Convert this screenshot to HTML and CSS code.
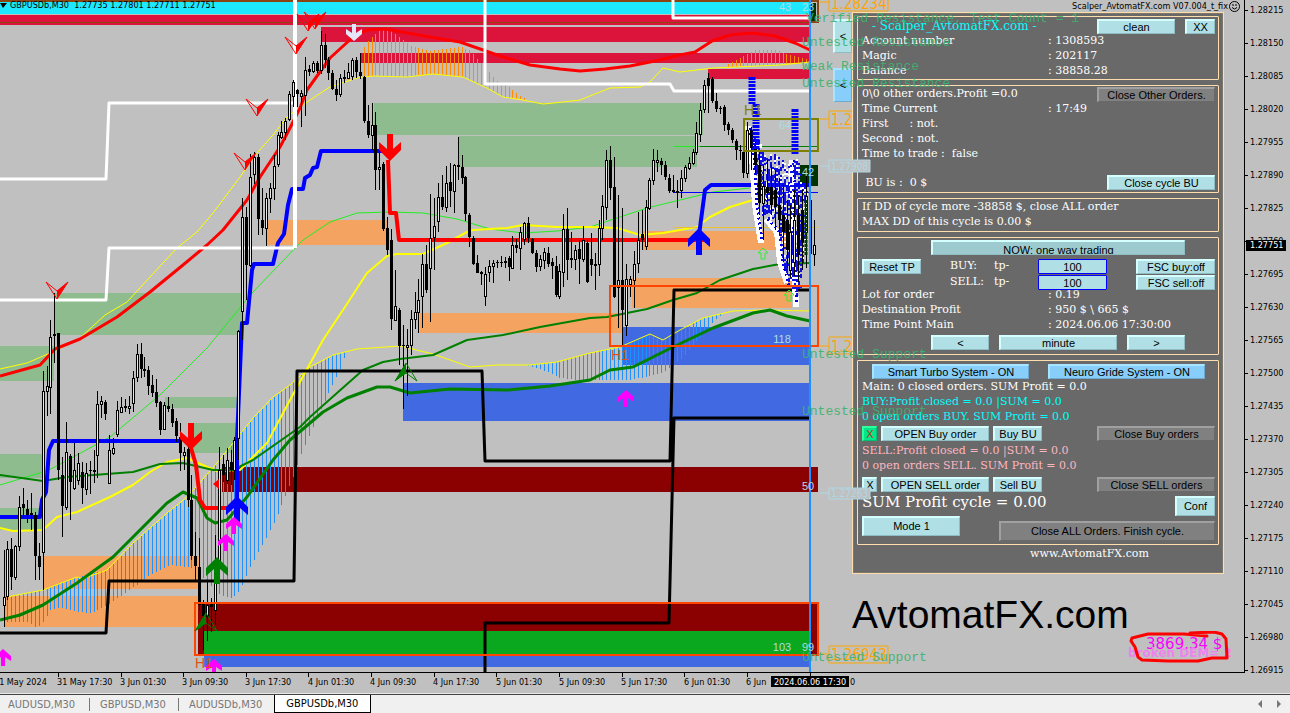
FILE: index.html
```html
<!DOCTYPE html>
<html lang="en">
<head>
<meta charset="utf-8">
<title>GBPUSDb,M30</title>
<link rel="stylesheet" href="styles.css">
</head>
<body>
<main class="terminal">
  <section class="plot">
    <svg class="layer">
      <!-- zones -->
      <g shape-rendering="crispEdges">
        <g fill="#8fbc8f">
          <path d="M374 103H703V135H374zM458 136H697V167H458zM54 293H242V335H54zM0 346H54V381H0zM0 454H43V478H0zM0 508H43V530H0zM165 397H238V408H165zM190 423H238V453H190z"/>
        </g>
        <path fill="#f4a460" d="M267 220H388V245H267zM43 556H199V589H43zM4 596H202V627H4zM420 313H623V333H420zM642 231H790V250H642zM632 278H792V308H632z"/>
        <path fill="#1ee8ff" d="M0 2H810V14H0z"/>
        <path fill="#dc143c" d="M0 15H810V25H0zM321 27H810V42H321zM361 53H810V63H361zM708 69H810V79H708z"/>
        <path fill="#8b4513" d="M0 0H818V2H0zM0 22H810V23H0z"/>
        <path fill="#4169e1" d="M403 383H810V421H403zM623 327H810V365H623zM204 656H810V667H204z"/>
        <path fill="#8b0000" d="M222 467H818V492H222zM198 604H818V654H198z"/>
        <path fill="#0aa81e" d="M204 631H810V654H204z"/>
        <path fill="#003300" d="M811 3H816V21H811zM800 165H818V186H800z"/>
      </g>
      <g id="bars" stroke-width="1" fill="none" shape-rendering="crispEdges"></g>
      <!-- moving averages -->
      <g fill="none" stroke-linejoin="round">
        <polyline stroke="#ff0" points="0,369 27,363 57,350 80,338 105,315 127,302 150,277 177,248 197,232 213,213 240,177 257,153 273,135 287,117 300,107 310,100 330,87 357,78 373,76 407,77 433,74 463,77 487,88 503,97 523,100 543,104 563,102 580,100 610,88 640,87 650,82 663,68 680,72 713,68 780,65 810,62"/>
        <polyline stroke="#ff0" points="7,597 43,590 77,577 82,579 107,570 133,543 167,513 187,497 217,463 233,443 253,418 273,397 290,385 310,367 333,355 357,349 400,346 433,354 470,367 497,365 530,365 557,362 590,353 620,347 650,334 663,340 680,330 703,318 733,311 763,310 810,311"/>
        <polyline stroke="#2e2" points="0,485 43,472 53,468 110,437 160,395 207,348 253,292 303,240 330,222 357,213 390,212 423,213 457,219 490,229 523,233 557,231 590,227 647,208 713,192 750,188"/>
        <polyline stroke="#ff0" stroke-width="2" points="0,528 13,531 43,530 57,517 77,512 110,497 133,485 150,472 167,462 187,458 207,467 217,471 240,470 247,463 267,443 290,400 323,340 343,310 367,273 387,256 397,254 423,254 447,243 467,232 473,230 507,228 523,225 557,227 590,227 617,228 640,235 663,233 697,227 710,217 730,207 753,200"/>
        <polyline stroke="green" stroke-width="2" points="0,475 43,481 67,477 133,472 160,464 183,463 213,470 233,470 253,460 300,427 310,417 337,393 363,370 383,362 400,359 433,355 467,340 503,335 540,327 590,318 607,317 647,309 673,300 697,293 720,280 753,269 780,264 810,263"/>
        <polyline stroke="green" stroke-width="3" points="0,620 20,615 43,605 77,583 113,557 143,527 167,503 183,492 197,498 207,518 215,523 227,520 247,497 273,460 290,440 323,412 347,398 377,387 390,387 410,393 450,389 507,390 550,386 590,380 610,370 633,367 673,347 713,328 753,313 770,310 787,316 810,321"/>
        <polyline stroke="red" stroke-width="3" points="0,376 40,365 55,349 80,339 117,317 150,292 183,265 207,245 223,230 247,200 260,177 280,147 290,128 300,108 307,90 330,58 353,37 367,30 385,29 430,37 460,42 483,50 500,56 530,65 560,69 580,71 605,69 630,66 655,61 680,55 695,52 712,41 730,35 752,33 775,36 795,43 810,50"/>
      </g>
      <path d="M674 146.500H700" stroke="#2e2"/><path d="M700 146.500H818" stroke="green"/>
      <path d="M674 192.500H818" stroke="#00f"/><path d="M674 227.500H818" stroke="#e8c030"/>
      <!-- step lines -->
      <g fill="none" stroke-linejoin="round">
        <path stroke="#00f" stroke-width="4" d="M0 517H40L42 500 46 492 49 450 53 441H180M237 505V440L242 323H247L252 270 254 264H273L278 243 284 234 288 205 292 189H303L305 178 310 175 313 168 317 167 321 151H383M699 235L705 190 711 185H810"/>
        <path stroke="red" stroke-width="4" d="M191 448L196 465 200 500 205 508H228M388 160L390 213H396L399 240H705"/>
        <path stroke="#000" stroke-width="3" d="M0 633H106L109 581H294L297 371H482L485 461H670L674 290H811M485 672V623H669L674 418H811"/>
        <path stroke="#fff" stroke-width="3" d="M0 179H106L109 103H294M0 300H106L109 248H294M485 0V84H670L674 91H811M673 0V18H810"/>
        <path stroke="#fff" stroke-width="4" d="M295 0V248"/>
      </g>
      <!-- order trails -->
      <g fill="none" stroke-linejoin="round" shape-rendering="crispEdges">
        <path stroke="#fff" stroke-width="6" d="M748 126L752 155 755 205 761 243M766 219L777 232 780 262 787 283M792 160L793 240 796 307"/>
        <path stroke="#0000e8" stroke-width="3" stroke-dasharray="2 3" d="M750 128L754 155 757 205 762 240M768 219L780 232 783 262 789 285M794 160L795 240 797 305"/>
      </g>
      <g id="noise" shape-rendering="crispEdges"></g>
      <g id="candles" stroke="#000" shape-rendering="crispEdges"></g>
      <path stroke="#003c00" stroke-width="3" stroke-dasharray="3 1" d="M806 200V255"/>
      <path stroke="#00f" stroke-width="7" stroke-dasharray="3 1 2 1" d="M752 77V104M756 104V150M795 109V155"/>
      <!-- frames -->
      <g fill="none" stroke-width="2">
        <rect x="195" y="603" width="623" height="52" stroke="#ff4500"/>
        <rect x="610" y="286" width="208" height="60" stroke="#ff4500"/>
        <rect x="744" y="119" width="74" height="32" stroke="#808000"/>
        <path d="M818 0V22H810" stroke="#8b4513"/>
      </g>
      <!-- arrows -->
      <defs>
        <path id="down" d="M-3-27H3V-12L11-19V-11L0 0-11-11V-19L-3-12z"/>
        <path id="small" d="M-2 17V8L-8 12V7L0 0 8 7V12L2 8V17z"/>
        <g id="dart"><path d="M0 0L-11-17 0-8 11-17z" fill="none" stroke="red"/><path d="M0 0V-8L11-17z" fill="red"/></g>
        <g id="tri"><path d="M0 0L-11 18 0 10 11 18z" fill="none" stroke="green"/><path d="M0 0V10L-11 18z" fill="green"/></g>
        <path id="hollow" d="M0 0L5 5H2V11H-2V5H-5z" fill="none" stroke="#3e3"/>
      </defs>
      <use href="#down" transform="translate(191 450)" fill="red"/>
      <use href="#down" transform="translate(390 161)" fill="red"/>
      <use href="#down" transform="translate(237 496) scale(1 -1)" fill="#00f"/>
      <use href="#down" transform="translate(699 228) scale(1 -1)" fill="#00f"/>
      <use href="#down" transform="translate(217 557) scale(1 -1)" fill="green"/>
      <use href="#small" transform="translate(354 41) scale(1 -1)" fill="#e6e6fa"/>
      <g fill="#f0f"><use href="#small" x="226" y="534"/><use href="#small" x="234" y="517"/><use href="#small" x="626" y="390"/><use href="#small" x="3" y="649"/><use href="#small" x="214" y="659"/></g>
      <use href="#dart" x="57" y="299"/><use href="#dart" x="257" y="116"/><use href="#dart" x="245" y="170"/><use href="#dart" x="296" y="54"/><use href="#dart" x="308" y="31"/><use href="#dart" x="315" y="29"/>
      <use href="#tri" x="406" y="363"/><use href="#tri" x="206" y="613"/>
      <use href="#hollow" x="763" y="248"/><use href="#hollow" x="789" y="290"/>
      <path fill="red" d="M213 484L219 479V489z"/>
      <path d="M810 0V690" stroke="#1e90ff" stroke-width="2"/>
      <g class="frame-tag"><text x="611" y="360" fill="#e0501c">H1</text><text x="195" y="668" fill="#e0501c">H1</text><text x="744" y="115" fill="#808000">H1</text></g>
      <g class="count" text-anchor="middle"><text x="785" y="11">43</text><text x="808" y="11">23</text><text x="785" y="129">64</text><text x="808" y="176">42</text><text x="782" y="343">118</text><text x="808" y="490">50</text><text x="782" y="651">103</text><text x="808" y="651">99</text></g>
      <g class="level" fill="none" stroke="orange"><path d="M820 2H829M829-6V11H888V-6M820 119H829M829 111H888V128H829zM820 346H829M829 337H888V354H829zM820 654H829M829 646H888V663H829z"/></g>
      <g class="level"><text x="831" y="9">1.28234</text><text x="831" y="125">1.27999</text><text x="831" y="352">1.27551</text><text x="831" y="660">1.26943</text></g>
    </svg>

    <header class="quote"><svg width="7" height="5"><path d="M0 0H7L3 5z"/></svg><span>GBPUSDb,M30&nbsp; 1.27735 1.27801 1.27711 1.27751</span></header>
    <div class="expert"><span>Scalper_AvtomatFX.com V07.004_t_fix</span><svg width="11" height="11" fill="none" stroke="#000"><circle cx="5.500" cy="5.500" r="5"/><path d="M3 6.500Q5.500 9.500 8 6.500M4 3V5M7 3V5"/></svg></div>

    <aside class="side">
      <div class="flaps"><button class="btn">&lt;</button><button class="btn sky">&lt;</button></div>
      <div class="panel">
        <section class="group g-account">
          <div class="line title"><h1>- Scalper_AvtomatFX.com -</h1><button class="btn w78">clean</button><button class="btn w30">XX</button></div>
          <div class="line pair"><span>Account number</span><span>: 1308593</span></div>
          <div class="line pair"><span>Magic</span><span>: 202117</span></div>
          <div class="line pair"><span>Balance</span><span>: 38858.28</span></div>
        </section>
        <section class="group g-time">
          <div class="line"><span>0\0 other orders.Profit =0.0</span><button class="btn gray w118 push">Close Other Orders.</button></div>
          <div class="line pair"><span>Time Current</span><span>: 17:49</span></div>
          <div class="line">First      : not.</div>
          <div class="line">Second  : not.</div>
          <div class="line">Time to trade :  false</div>
          <div class="line bu"><span> BU is :  0 $</span><button class="btn w108 push">Close cycle BU</button></div>
        </section>
        <section class="group g-dd">
          <div class="line">If DD of cycle more -38858 $, close ALL order</div>
          <div class="line">MAX DD of this cycle is 0.00 $</div>
        </section>
        <section class="group g-trade">
          <button class="btn now">NOW: one way trading</button>
          <div class="tp">
            <button class="btn w59">Reset TP</button><label for="tpb">BUY:</label><label for="tpb">tp-</label><input id="tpb" value="100"><button class="btn">FSC buy:off</button>
            <span></span><label for="tps">SELL:</label><label for="tps">tp-</label><input id="tps" value="100"><button class="btn">FSC sell:off</button>
          </div>
          <div class="facts">
            <div class="line pair"><span>Lot for order</span><span>: 0.19</span></div>
            <div class="line pair"><span>Destination Profit</span><span>: 950 $ \ 665 $</span></div>
            <div class="line pair"><span>Time Point Main</span><span>: 2024.06.06 17:30:00</span></div>
          </div>
          <div class="stepper"><button class="btn">&lt;</button><button class="btn">minute</button><button class="btn">&gt;</button></div>
        </section>
        <section class="group g-orders">
          <div class="systems"><button class="btn sky">Smart Turbo System - ON</button><button class="btn sky">Neuro Gride System - ON</button></div>
          <div class="line">Main: 0 closed orders. SUM Profit = 0.0</div>
          <div class="line buy">BUY:Profit closed = 0.0 |SUM = 0.0</div>
          <div class="line buy">0 open orders BUY. SUM Profit = 0.0</div>
          <div class="orders o-buy"><button class="btn on">X</button><button class="btn w108">OPEN Buy order</button><button class="btn w49">Buy BU</button><button class="btn gray w118 push">Close Buy orders</button></div>
          <div class="line sell">SELL:Profit closed = 0.0 |SUM = 0.0</div>
          <div class="line sell">0 open orders SELL. SUM Profit = 0.0</div>
          <div class="orders o-sell"><button class="btn">X</button><button class="btn w108">OPEN SELL order</button><button class="btn w49">Sell BU</button><button class="btn gray w118 push">Close SELL orders</button></div>
          <div class="finish">
            <div class="left"><span class="sum">SUM Profit cycle = 0.00</span><button class="btn tall w98">Mode 1</button></div>
            <div class="right"><button class="btn tall w40">Conf</button><button class="btn tall gray w216">Close ALL Orders. Finish cycle.</button></div>
          </div>
        </section>
        <a class="site" href="#">www.AvtomatFX.com</a>
      </div>
      <div class="brand">AvtomatFX.com</div>
      <div class="stamp">
        <span class="gain">3869.34 $</span><span class="broken">broken DEM= 2</span>
        <svg width="110" height="36" viewBox="0 0 110 36"><path d="M79 5L56 3 20 3 4 7 3 10 7 16 10 26 14 29 40 30 70 30 84 27 99 27 98 8 94 3 86 1 62 2" fill="none" stroke="red" stroke-width="3" stroke-linejoin="round" stroke-linecap="round"/></svg>
      </div>
    </aside>

    <svg class="layer over">
      <g class="zone"><text x="806" y="22">Verified Resistance, Test Count = 1</text><text x="802" y="46">Untested Resistance</text><text x="802" y="70">Weak Resistance</text><text x="802" y="87">Untested Resistance</text><text x="802" y="358">Untested Support</text><text x="802" y="415">Untested Support</text><text x="802" y="661">Untested Support</text></g>
      <g class="tag"><path d="M820 166H829M820 493H829"/><path d="M829 160H870V172H829zM829 488H870V499H829z"/><text x="831" y="170">1.27908</text><text x="831" y="497">1.27263</text></g>
    </svg>
  </section>

  <section class="prices">
    <ol><li>1.28215</li><li>1.28150</li><li>1.28085</li><li>1.28020</li><li>1.27955</li><li>1.27890</li><li>1.27825</li><li>1.27760</li><li>1.27695</li><li>1.27630</li><li>1.27565</li><li>1.27500</li><li>1.27435</li><li>1.27370</li><li>1.27305</li><li>1.27240</li><li>1.27175</li><li>1.27110</li><li>1.27045</li><li>1.26980</li><li>1.26915</li></ol>
    <b class="bid">1.27751</b>
  </section>

  <svg class="dates">
    <path d="M58.500 0V4M121.500 0V4M183.500 0V4M246.500 0V4M308.500 0V4M371.500 0V4M434.500 0V4M496.500 0V4M559.500 0V4M622.500 0V4M684.500 0V4M747.500 0V4M810.500 0V4" stroke="#000"/>
    <text x="-6" y="12">31 May 2024</text><text x="57" y="12">31 May 17:30</text><text x="120" y="12">3 Jun 01:30</text><text x="182" y="12">3 Jun 09:30</text><text x="245" y="12">3 Jun 17:30</text><text x="308" y="12">4 Jun 01:30</text><text x="370" y="12">4 Jun 09:30</text><text x="433" y="12">4 Jun 17:30</text><text x="496" y="12">5 Jun 01:30</text><text x="559" y="12">5 Jun 09:30</text><text x="621" y="12">5 Jun 17:30</text><text x="684" y="12">6 Jun 01:30</text><text x="746" y="12">6 Jun</text><text x="850" y="12">0</text>
    <rect x="771" y="3" width="78" height="11"/><text class="now-date" x="810" y="12" text-anchor="middle">2024.06.06 17:30</text>
  </svg>
</main>
<nav class="tabs"><a href="#">AUDUSD,M30</a><a href="#">GBPUSD,M30</a><a href="#">AUDUSDb,M30</a><a href="#" class="active">GBPUSDb,M30</a>
  <svg width="26" height="8" fill="#777"><path d="M4 0V8L0 4zM19 0V8L23 4z"/></svg></nav>
<script src="chart.js"></script>
</body>
</html>
```
FILE: styles.css
```css
* { box-sizing: border-box; }
body { margin: 0; height: 100vh; display: flex; flex-direction: column; overflow: hidden; background: #c0c0c0; color: #000; font-family: "DejaVu Sans Condensed", "DejaVu Sans", sans-serif; font-size: 9px; }
.terminal { flex: 1; min-height: 0; display: grid; grid-template-columns: 1fr 45px; grid-template-rows: 1fr 21px; }
.plot { position: relative; overflow: hidden; border-right: 1px solid #000; border-bottom: 1px solid #000; }
.layer { position: absolute; top: 0; left: 0; width: 100%; height: 100%; }
.over { pointer-events: none; }
.frame-tag { font: 14px "Liberation Sans", sans-serif; }
.count { font: 11px "Liberation Sans", sans-serif; fill: #b0dce0; }
.level text { font-size: 15px; fill: #ffa500; }
.zone { font: 13px "Liberation Mono", monospace; fill: #3cb371; opacity: .9; }
.tag path { fill: #c0c0c0; stroke: #add8e6; }
.tag text { font-size: 10px; fill: #add8e6; }

.quote { position: absolute; top: 0; left: 0; display: flex; align-items: center; gap: 3px; line-height: 10px; }
.expert { position: absolute; top: 1px; right: 4px; display: flex; align-items: center; gap: 1px; line-height: 11px; }

.side { position: absolute; top: 12px; right: 20px; width: 372px; }
.flaps { position: absolute; top: 7px; right: 372px; width: 19px; display: grid; gap: 15px; }
.flaps .btn { height: 34px; }
.panel { position: relative; background: #696969; border: 1px solid #ffdead; padding: 3px 4px 12px; display: grid; gap: 5px; color: #fff; font: 11px "DejaVu Serif", serif; box-shadow: inset 0 0 0 1px #7d766a; }
.group { border: 1px solid #ffdead; border-radius: 1px; padding: 0 3px 2px 4px; }
.line { display: flex; height: 15px; line-height: 15px; white-space: pre; }
.pair { display: grid; grid-template-columns: 186px 1fr; }
.push { margin-left: auto; }

.btn { height: 15px; padding: 0; border-style: solid; border-color: #d5ffff #8fbcc2 #8fbcc2 #d5ffff; border-width: 2px 1px 1px 2px; background: #b0e0e6; color: #000; font: 11px/11px "Liberation Sans", sans-serif; white-space: nowrap; overflow: hidden; }
.gray { background: #808080; border-color: #a0a0a0 #696969 #696969 #a0a0a0; }
.sky { background: #87cefa; border-color: #a8e4ff #6fa8d0 #6fa8d0 #a8e4ff; }
.on { background: #00e68a; border-color: #30ff9c #00c070 #00c070 #30ff9c; color: #c03010; }
.tall { height: 20px; }
.w30 { width: 30px; } .w40 { width: 40px; } .w49 { width: 49px; } .w59 { width: 59px; } .w78 { width: 78px; }
.w98 { width: 98px; } .w108 { width: 108px; } .w118 { width: 118px; } .w216 { width: 216px; }

.g-account { padding-top: 2px; padding-bottom: 1px; }
.title { height: 14px; gap: 10px; }
.title h1 { margin: 0 auto 0 10px; font: 12px/15px "DejaVu Serif", serif; color: #0ff; }
.bu { margin-top: 14px; }
.g-time .push { margin-top: 1px; }
.g-time .bu .push { margin-top: 0; }
.g-time { height: 108px; }
.g-trade { padding-top: 2px; padding-bottom: 4px; }
.now { display: block; width: 254px; margin: 0 0 4px 69px; padding-top: 3px; background: #9ccace; }
.tp { display: grid; grid-template-columns: 88px 44px 44px 98px 79px; row-gap: 1px; line-height: 13px; }
.tp input { width: 69px; height: 15px; padding: 0; border: 1px solid #00f; border-radius: 1px; background: #b0e0e6; font: 11px "Liberation Sans", sans-serif; text-align: center; }
.facts { margin-top: -3px; }
.stepper { display: grid; grid-template-columns: 58px 118px 58px; gap: 10px; margin: 3px 0 0 69px; }
.g-orders { padding-top: 3px; padding-bottom: 3px; }
.systems { display: grid; grid-template-columns: 157px 157px; gap: 19px; margin-left: 10px; }
.buy { color: #0ff; }
.sell { color: #ffb6c1; }
.orders { display: flex; gap: 4px; }
.orders .btn:first-child { width: 15px; }
.o-buy { margin: 2px 0; }
.o-sell { margin-top: 4px; }
.finish { display: flex; justify-content: space-between; height: 49px; }
.left, .right { display: flex; flex-direction: column; gap: 4px; }
.right { align-items: flex-end; padding-top: 4px; gap: 5px; margin-left: -60px; }
.sum { font-size: 15px; line-height: 20px; white-space: nowrap; }
.site { justify-self: center; margin: -4px 0 0 103px; line-height: 15px; color: #fff; text-decoration: none; }
.brand { margin-top: 19px; font: 39px/44px "Liberation Sans", sans-serif; }
.stamp { position: relative; display: grid; width: 110px; margin: -6px -14px 0 auto; color: #f0f; white-space: nowrap; }
.stamp svg { position: absolute; top: 0; left: 0; }
.gain { font: 15px/14px "DejaVu Sans", sans-serif; margin: 6px 0 0 18px; }
.broken { font: bold 12px/12px "DejaVu Sans", sans-serif; color: #ee82ee; margin-top: -4px; }

.prices { position: relative; }
.prices ol { list-style: none; margin: 0; padding: 5px 0 0; height: calc(100% + 2px); display: flex; flex-direction: column; justify-content: space-between; line-height: 10px; }
.prices li { display: flex; align-items: center; gap: 2px; }
.prices li::before { content: ""; width: 3px; height: 1px; background: #000; }
.bid { position: absolute; left: 1px; top: 240px; width: 40px; padding-left: 4px; background: #000; color: #fff; font-weight: normal; line-height: 11px; }
.dates { grid-column: 1 / 3; width: 100%; height: 21px; }
.now-date { fill: #fff; }

.tabs { display: flex; align-items: stretch; height: 19px; background: #f0f0f0; border-top: 1px solid #444; outline: 1px solid #e8e8e8; font-size: 11px; }
.tabs a { display: flex; align-items: center; padding: 0 12px 0 11px; color: #777; text-decoration: none; position: relative; }
.tabs a:first-child { padding-left: 8px; padding-right: 14px; }
.tabs a + a::before { content: ""; position: absolute; left: 0; top: 3px; height: 13px; border-left: 1px solid #777; }
.tabs .active { background: #fff; color: #000; border: solid #000; border-width: 0 1px 1px; }
.tabs a.active::before { display: none; }
.tabs svg { margin: 5px 6px 0 auto; }
```
FILE: chart.js
```js
const NS = 'http://www.w3.org/2000/svg';
const add = (id, d, attrs) => {
  const p = document.createElementNS(NS, 'path');
  p.setAttribute('d', d);
  for (const k in attrs) p.setAttribute(k, attrs[k]);
  document.getElementById(id).append(p);
};
// linear interpolation over a list of x,y points
const at = (pts, x) => {
  for (let i = 1; i < pts.length; i++) {
    if (x <= pts[i][0]) {
      const [a, b] = pts[i - 1], [c, d] = pts[i];
      return b + (d - b) * (x - a) / (c - a);
    }
  }
  return pts[pts.length - 1][1];
};
const parse = s => s.split(' ').map(p => p.split(',').map(Number));
const START = 3.5, STEP = 3.915;

const histogram = (top, bottom, color) => {
  const t = parse(top), b = parse(bottom);
  let d = '';
  const end = Math.min(t[t.length - 1][0], b[b.length - 1][0]);
  for (let x = START; x <= end; x += STEP) {
    if (x < Math.max(t[0][0], b[0][0])) continue;
    const y1 = Math.round(at(t, x)), y2 = Math.round(at(b, x));
    if (y2 > y1) d += `M${Math.round(x)} ${y1}h1V${y2}h-1z`;
  }
  add('bars', d, { fill: color });
};
histogram('7,597 43,590 77,577 107,570 133,543 167,513 187,497 217,463 233,443 253,418 273,397 290,385 310,367 333,355 345,352',
  '7,622 27,622 37,628 43,622 50,610 60,608 78,612 92,613 107,605 125,593 150,575 170,565 192,568 205,580 220,595 232,598 240,590 250,567 262,545 275,520 292,480 301,454 320,410 340,370 345,355', '#1e90ff');
histogram('528,365 557,362 590,353 620,347 650,334 663,340 680,330 703,318 722,313',
  '528,366 545,371 560,378 580,380 630,380 663,373 680,360 693,345 713,322 722,314', '#1e90ff');
histogram('345,80 355,70 361,52 368,40 380,30 390,29 400,38 410,46 430,51 460,47 470,50 480,62 487,70 495,80 510,88 525,99',
  '345,81 357,78 373,76 407,77 433,74 463,77 487,88 503,97 525,100', '#ff8c00');
histogram('725,65 740,58 755,50 775,50 790,55 808,60', '725,67 780,65 808,63', '#ff8c00');

// scattered order marks near the last bars
const trailTop = parse('754,132 762,148 775,155 785,162 790,165 797,158 803,185 808,195');
const trailLow = parse('754,170 762,215 768,218 778,225 783,265 789,286 793,288 799,300 803,250 808,225');
let seed = 7;
const rnd = () => (seed = seed * 16807 % 2147483647) / 2147483647;
let blue = '', white = '';
for (let x = 754; x < 807; x += 2) {
  const end = at(trailLow, x);
  for (let y = at(trailTop, x); y < end; y += 2) {
    const r = rnd();
    const cell = `M${x} ${Math.round(y)}h2v2h-2z`;
    if (r < .45) blue += cell;
    else if (r < .6) white += cell;
  }
}
add('noise', blue, { fill: '#1010e0' });
add('noise', white, { fill: '#fff' });

// high, body top, body bottom, low, 1 = falling bar
const bars = `550,597,605,627,0 541,549,596,600,0 538,549,577,590,1 545,546,577,580,0 496,507,546,551,0 488,504,508,518,1 500,509,515,523,1 493,513,514,530,0 512,515,556,580,1 543,556,567,580,1
371,391,552,590,0 366,386,391,416,0 320,337,387,414,0 293,334,336,363,1 333,333,470,480,1 457,475,506,537,1 422,452,507,510,0 454,456,482,520,1 443,470,488,490,0 453,463,480,485,0
462,472,488,504,1 463,473,489,495,0 461,470,471,494,1 450,470,471,483,0 391,404,455,478,0 396,401,404,418,0 400,402,414,420,1 435,450,483,484,0 438,448,453,455,0 401,410,434,437,0
397,407,412,413,0 399,406,408,412,1 396,406,408,414,0 371,378,403,412,0 344,354,377,382,0 343,354,369,378,1 357,369,371,377,1 366,370,386,395,1 375,385,393,397,1 379,392,403,407,1
401,402,430,435,1 402,405,429,430,0 397,406,409,412,1 404,409,423,427,1 418,421,436,442,1 423,437,453,471,1 447,452,455,470,0 423,449,500,507,1 475,500,556,560,1 532,556,566,580,1
538,567,605,610,1 600,604,616,650,1 580,605,616,641,0 598,603,607,632,1 535,561,610,625,0 447,470,561,565,0 455,464,475,482,1 448,460,480,484,0 450,462,470,485,1 437,440,470,480,0
330,331,438,460,0 198,217,311,340,0 207,217,265,300,1 154,177,265,267,0 152,157,174,184,0 154,157,219,235,1 188,220,228,235,1 193,198,228,246,0 183,188,198,213,0 155,166,188,200,0
132,135,164,167,0 121,132,137,139,0 118,121,132,140,0 91,94,119,121,0 80,82,96,107,0 89,90,94,107,1 90,93,96,127,0 57,70,95,116,0 65,69,72,76,1 61,63,71,73,0
61,63,71,73,1 31,45,70,74,0 34,45,60,68,1 57,60,73,80,1 70,73,89,90,1 80,89,95,101,1 74,78,94,97,0 70,77,79,83,1 63,72,78,79,0 58,60,76,80,0
57,60,72,78,1 53,72,76,79,1 76,77,121,123,1 105,121,135,138,1 103,125,135,150,0 112,125,170,190,1 150,167,169,190,0 162,164,229,231,1 217,228,250,255,1 229,240,319,330,1
270,306,320,321,0 308,310,346,365,1 325,345,346,409,1 329,345,347,396,0 310,319,345,355,0 292,312,319,329,0 279,300,312,333,0 254,264,296,328,0 245,264,290,293,1 194,238,268,322,0
198,226,237,270,0 183,197,221,232,0 175,197,207,210,1 166,183,207,212,0 163,182,191,207,1 164,165,191,213,0 137,165,167,180,1 155,167,178,184,1 176,177,214,221,1 213,215,237,247,1
236,238,264,265,1 255,263,273,273,1 271,272,273,285,0 267,274,296,306,0 260,266,272,282,0 260,263,266,283,0 260,262,263,268,1 256,262,263,267,1 257,261,262,268,0 256,258,267,281,1
236,245,268,269,0 239,245,248,253,1 227,232,248,270,0 222,223,239,245,0 217,223,238,243,1 238,239,253,254,1 250,253,267,272,1 255,259,266,271,0 248,252,260,269,0 247,253,264,267,1
258,262,266,279,1 256,266,295,297,1 264,271,296,299,0 214,229,272,287,0 208,229,260,280,1 232,258,260,268,1 245,250,259,270,0 240,249,259,284,1 226,240,259,262,0 240,243,282,283,1
233,259,265,276,1 253,264,266,290,1 220,228,264,276,0 195,206,228,240,0 150,160,207,220,0 146,160,188,200,1 157,187,297,298,1 195,280,287,328,0 208,280,310,346,1 264,279,325,336,0
276,279,284,297,0 251,264,280,308,0 212,240,263,273,0 210,234,240,250,1 200,207,246,250,0 178,180,208,210,0 149,160,180,185,0 150,160,162,172,0 158,161,165,175,1 161,165,177,180,1
174,178,191,193,1 175,190,192,193,1 180,191,192,208,0 170,178,190,198,0 165,167,178,182,0 157,163,168,170,0 149,152,163,165,0 122,133,152,155,0 103,110,134,142,0 80,85,109,113,0
73,78,86,113,1 77,79,101,103,1 93,101,109,112,1 106,108,109,114,1 105,107,125,131,1 122,124,130,135,1 128,130,140,143,1 139,141,150,160,1 145,150,151,160,1 145,152,173,178,1
122,130,173,178,0 127,130,148,170,1 140,148,165,175,1 150,165,203,215,1 165,186,203,240,0 160,187,193,205,1 165,187,205,215,1 170,190,207,230,1 178,205,220,235,1 185,215,232,262,1
200,220,250,268,1 205,232,270,278,0 190,220,262,276,0 195,215,255,282,1 190,210,242,270,1 170,196,232,268,0 178,200,254,262,1 220,245,254,266,0`.split(/\s+/);
let wick = '', fall = '', rise = '';
bars.forEach((bar, i) => {
  const [h, t, b, l, down] = bar.split(',').map(Number);
  const x = Math.round(START + i * STEP);
  wick += `M${x + .5} ${h}V${l}`;
  if (down) fall += `M${x - 1} ${t}h3v${Math.max(b - t, 1)}h-3z`;
  else rise += `M${x - .5} ${t + .5}h2v${Math.max(b - t, 1)}h-2z`;
});
add('candles', wick, { fill: 'none' });
add('candles', fall, { fill: '#000', stroke: 'none' });
add('candles', rise, { fill: '#e8e8e8' });
```
